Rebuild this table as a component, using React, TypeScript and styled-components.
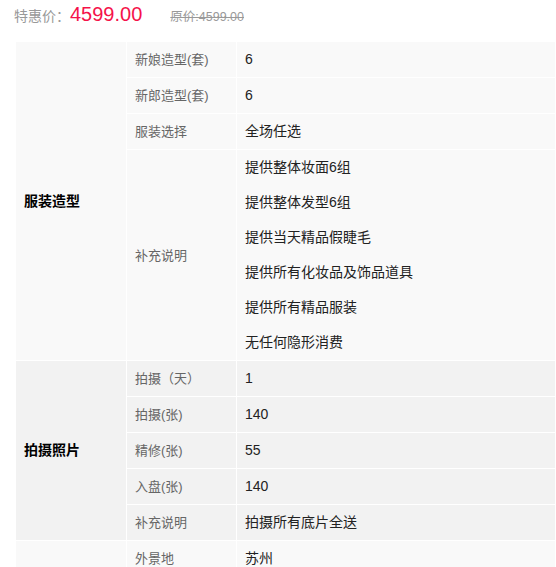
import React from "react";
import styled, { createGlobalStyle } from "styled-components";

const Global = createGlobalStyle`
  html, body { margin: 0; padding: 0; background: #fff; }
  body { font-family: "Liberation Sans", Arial, "Noto Sans CJK SC", sans-serif; overflow: hidden; }
`;

const Page = styled.div`
  width: 556px;
  padding-left: 14px;
  box-sizing: border-box;
`;

const PriceBar = styled.div`
  display: flex;
  align-items: baseline;
  height: 42px;
  padding-top: 3px;
  box-sizing: border-box;
`;

const PriceLabel = styled.span`
  font-size: 14px;
  color: #999;
`;

const Price = styled.span`
  font-size: 20px;
  color: #f5124a;
`;

const OldPrice = styled.span`
  margin-left: 28px;
  font-size: 12.5px;
  color: #999;
  text-decoration: line-through;
`;

const Table = styled.table`
  margin-left: 2px;
  width: 540px;
  border-collapse: separate;
  border-spacing: 0;
  table-layout: fixed;
`;

const Cell = styled.td<{ $shade: boolean }>`
  background: ${(p) => (p.$shade ? "#f2f2f2" : "#f9f9f9")};
  border-right: 1px solid #fff;
  border-bottom: 1px solid #fff;
  padding: 0 8px;
  vertical-align: middle;
  line-height: 35px;
`;

const GroupCell = styled(Cell)`
  width: 94px;
  font-size: 14px;
  font-weight: bold;
  color: #000;
`;

const LabelCell = styled(Cell)`
  width: 93px;
  font-size: 13px;
  color: #666;
`;

const ValueCell = styled(Cell)`
  font-size: 14px;
  color: #222;
  white-space: nowrap;
  overflow: hidden;
`;

const Line = styled.div`
  line-height: 35px;
`;

type Row = { label: string; values: string[] };
type Group = { name: string; shade: boolean; rows: Row[] };

const groups: Group[] = [
  {
    name: "服装造型",
    shade: false,
    rows: [
      { label: "新娘造型(套)", values: ["6"] },
      { label: "新郎造型(套)", values: ["6"] },
      { label: "服装选择", values: ["全场任选"] },
      {
        label: "补充说明",
        values: [
          "提供整体妆面6组",
          "提供整体发型6组",
          "提供当天精品假睫毛",
          "提供所有化妆品及饰品道具",
          "提供所有精品服装",
          "无任何隐形消费",
        ],
      },
    ],
  },
  {
    name: "拍摄照片",
    shade: true,
    rows: [
      { label: "拍摄（天）", values: ["1"] },
      { label: "拍摄(张)", values: ["140"] },
      { label: "精修(张)", values: ["55"] },
      { label: "入盘(张)", values: ["140"] },
      { label: "补充说明", values: ["拍摄所有底片全送"] },
    ],
  },
  {
    name: "",
    shade: false,
    rows: [
      { label: "外景地", values: ["苏州"] },
      { label: "", values: [""] },
    ],
  },
];

export default function App() {
  return (
    <Page>
      <Global />
      <PriceBar>
        <PriceLabel>特惠价：</PriceLabel>
        <Price>4599.00</Price>
        <OldPrice>原价:4599.00</OldPrice>
      </PriceBar>
      <Table>
        <tbody>
          {groups.map((g, gi) =>
            g.rows.map((r, ri) => (
              <tr key={`${gi}-${ri}`}>
                {ri === 0 && (
                  <GroupCell $shade={g.shade} rowSpan={g.rows.length}>
                    {g.name}
                  </GroupCell>
                )}
                <LabelCell $shade={g.shade}>{r.label}</LabelCell>
                <ValueCell $shade={g.shade}>
                  {r.values.map((v, vi) => (
                    <Line key={vi}>{v || "\u00a0"}</Line>
                  ))}
                </ValueCell>
              </tr>
            ))
          )}
        </tbody>
      </Table>
    </Page>
  );
}
